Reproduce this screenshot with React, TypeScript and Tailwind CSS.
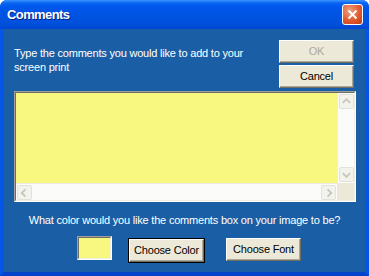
import React from "react";

const btn =
  "h-[23px] w-[75px] bg-[#ece9d8] border border-t-white border-l-white border-r-[#716f64] border-b-[#716f64] shadow-[inset_-1px_-1px_0_#aca899] text-[11px] tracking-[-0.2px]";

function Chevron({ dir }: { dir: "up" | "down" | "left" | "right" }) {
  const paths = {
    up: "M3 8 L7 4 L11 8",
    down: "M3 5 L7 9 L11 5",
    left: "M8 3 L4 7 L8 11",
    right: "M6 3 L10 7 L6 11",
  };
  return (
    <svg width="14" height="14" viewBox="0 0 14 14">
      <path d={paths[dir]} fill="none" stroke="#c9c7ba" strokeWidth="2" />
    </svg>
  );
}

function ScrollBtn({ dir }: { dir: "up" | "down" | "left" | "right" }) {
  return (
    <div className="w-[15px] h-[15px] m-px rounded-[2px] border border-[#e2e1da] bg-[#f3f3ee] flex items-center justify-center">
      <Chevron dir={dir} />
    </div>
  );
}

export default function App() {
  return (
    <div
      className="w-[369px] h-[276px] bg-white"
      style={{ fontFamily: '"Liberation Sans", Arial, sans-serif' }}
    >
      <div className="w-full h-full flex flex-col rounded-t-[7px] overflow-hidden bg-[#0054e3]">
        {/* title bar */}
        <div className="h-[29px] flex items-center justify-between pl-[7px] pr-[6px] bg-[linear-gradient(to_bottom,#3d95ff_0px,#0a66f0_3px,#0058ee_6px,#0054e3_14px,#0050dc_24px,#0046d0_29px)]">
          <span className="text-white font-bold text-[13px] tracking-[-0.6px] [text-shadow:1px_1px_0_#0a1f80]">
            Comments
          </span>
          <div className="w-[21px] h-[21px] rounded-[3px] border border-white bg-[radial-gradient(circle_at_35%_30%,#f0a080,#e35a2f_55%,#c13a14)] flex items-center justify-center">
            <svg width="11" height="11" viewBox="0 0 11 11">
              <path d="M1.5 1.5 L9.5 9.5 M9.5 1.5 L1.5 9.5" stroke="white" strokeWidth="2" />
            </svg>
          </div>
        </div>
        {/* body */}
        <div className="flex-1 flex flex-col border-x-4 border-b-4 border-x-[#0556e6] border-b-[#0343c9]">
          <div className="flex-1 bg-[#1a5fa6] flex flex-col px-[10px] pt-[11px] text-white text-[11px] tracking-[-0.2px]">
            <div className="flex justify-between">
              <p className="w-[250px] mt-[6px] leading-[14px]">
                Type the comments you would like to add to your screen print
              </p>
              <div className="flex flex-col gap-[2px] mr-px">
                <button className={btn + " text-[#aca899]"}>OK</button>
                <button className={btn + " text-black"}>Cancel</button>
              </div>
            </div>
            <div className="mt-[3px] w-[342px] h-[111px] border border-t-[#a0a0a0] border-l-[#a0a0a0] border-r-white border-b-white">
              <div className="w-full h-full border border-t-[#716f64] border-l-[#716f64] border-r-[#f1efe2] border-b-[#f1efe2] grid grid-cols-[1fr_17px] grid-rows-[1fr_17px]">
                <div className="bg-[#f8f880]" />
                <div className="bg-[#fbfbf9] border-l border-[#eeede5] flex flex-col justify-between">
                  <ScrollBtn dir="up" />
                  <ScrollBtn dir="down" />
                </div>
                <div className="bg-[#fbfbf9] border-t border-[#eeede5] flex justify-between">
                  <ScrollBtn dir="left" />
                  <ScrollBtn dir="right" />
                </div>
                <div className="bg-[#ece9d8]" />
              </div>
            </div>
            <p className="mt-[11px] text-center leading-[14px]">
              What color would you like the comments box on your image to be?
            </p>
            <div className="mt-[9px] flex items-start">
              <div className="ml-[63px] w-[35px] h-[24px] border border-t-[#a0a0a0] border-l-[#a0a0a0] border-r-white border-b-white">
                <div className="w-full h-full border border-t-[#716f64] border-l-[#716f64] border-r-[#f1efe2] border-b-[#f1efe2] bg-[#f8f880]" />
              </div>
              <div className="ml-[16px] mt-[2px] border border-black">
                <button className={btn + " text-black h-[21px] w-[73px] block"}>Choose Color</button>
              </div>
              <button className={btn + " text-black ml-[21px] mt-[2px]"}>Choose Font</button>
            </div>
          </div>
        </div>
      </div>
    </div>
  );
}
